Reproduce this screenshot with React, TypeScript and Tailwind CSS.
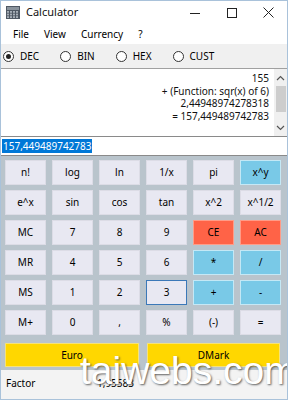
import React from "react";

const rows: { label: string; kind?: "blue" | "red" | "focus" }[][] = [
  [{ label: "n!" }, { label: "log" }, { label: "ln" }, { label: "1/x" }, { label: "pi" }, { label: "x^y", kind: "blue" }],
  [{ label: "e^x" }, { label: "sin" }, { label: "cos" }, { label: "tan" }, { label: "x^2" }, { label: "x^1/2" }],
  [{ label: "MC" }, { label: "7" }, { label: "8" }, { label: "9" }, { label: "CE", kind: "red" }, { label: "AC", kind: "red" }],
  [{ label: "MR" }, { label: "4" }, { label: "5" }, { label: "6" }, { label: "*", kind: "blue" }, { label: "/", kind: "blue" }],
  [{ label: "MS" }, { label: "1" }, { label: "2" }, { label: "3", kind: "focus" }, { label: "+", kind: "blue" }, { label: "-", kind: "blue" }],
  [{ label: "M+" }, { label: "0" }, { label: "," }, { label: "%" }, { label: "(-)" }, { label: "=" }],
];

function Radio({ label, checked }: { label: string; checked?: boolean }) {
  return (
    <div className="flex items-center gap-[6px]">
      <span className="w-[11px] h-[11px] rounded-full border border-[#333] bg-white flex items-center justify-center">
        {checked && <span className="w-[5px] h-[5px] rounded-full bg-[#222]" />}
      </span>
      <span>{label}</span>
    </div>
  );
}

function Key({ label, kind }: { label: string; kind?: "blue" | "red" | "focus" }) {
  let cls = "bg-[#e8e8f2] border-[#dcdce6]";
  if (kind === "blue") cls = "bg-[#79c9e7] border-[#c4e8f5]";
  if (kind === "red") cls = "bg-[#ff6347] border-[#ff9c88]";
  if (kind === "focus") cls = "bg-[#e8e8f2] border-[#3b78b8]";
  return (
    <div className={`h-[25px] border flex items-center justify-center text-[10px] text-black ${cls}`}>
      {label}
    </div>
  );
}

export default function App() {
  return (
    <div
      className="relative w-[288px] h-[400px] flex flex-col border border-[#a9c2da] overflow-hidden text-black"
      style={{ fontFamily: '"Noto Sans", "Open Sans", sans-serif' }}
    >
      {/* title bar */}
      <div className="h-[23px] bg-white flex items-center">
        <svg width="14" height="13" viewBox="0 0 14 13" className="ml-[5px]">
          <rect x="0" y="0" width="14" height="13" fill="#4f5863" />
          <rect x="1" y="1" width="12" height="3" fill="#8a939c" />
          {[0, 1, 2, 3].map((c) =>
            [0, 1, 2].map((r) => (
              <rect key={`${c}-${r}`} x={1 + c * 3} y={5 + r * 2.6} width="2" height="1.8" fill="#a7afb7" />
            ))
          )}
        </svg>
        <span className="ml-[6px] text-[11px] text-[#111]">Calculator</span>
        <div className="ml-auto flex h-full">
          <div className="w-[37px] flex items-center justify-center">
            <svg width="10" height="10" viewBox="0 0 10 10">
              <line x1="0" y1="5.5" x2="10" y2="5.5" stroke="#222" strokeWidth="1" />
            </svg>
          </div>
          <div className="w-[37px] flex items-center justify-center">
            <svg width="10" height="10" viewBox="0 0 10 10">
              <rect x="0.5" y="0.5" width="9" height="9" fill="none" stroke="#222" strokeWidth="1" />
            </svg>
          </div>
          <div className="w-[37px] flex items-center justify-center">
            <svg width="11" height="11" viewBox="0 0 11 11">
              <path d="M0.5 0.5 L10.5 10.5 M10.5 0.5 L0.5 10.5" stroke="#222" strokeWidth="1" />
            </svg>
          </div>
        </div>
      </div>

      {/* menu */}
      <div className="h-[20px] bg-white flex items-center pl-[12px] gap-[15px] text-[10px]">
        <span>File</span>
        <span>View</span>
        <span>Currency</span>
        <span>?</span>
      </div>

      {/* radios */}
      <div className="h-[24px] bg-[#f0f0f0] flex items-center pl-[2px] gap-[21px] text-[10px]">
        <Radio label="DEC" checked />
        <Radio label="BIN" />
        <Radio label="HEX" />
        <Radio label="CUST" />
      </div>

      {/* output */}
      <div className="h-[68px] bg-white border-t border-[#a0a0a0] flex">
        <div className="flex-1 pt-[3px] pr-[5px] text-right text-[10px] leading-[12.6px] text-[#111]">
          <div>155</div>
          <div>+ (Function: sqr(x) of 6)</div>
          <div>2,44948974278318</div>
          <div>= 157,449489742783</div>
        </div>
        <div className="w-[13px] bg-[#f0f0f0] flex flex-col items-center">
          <svg width="9" height="6" viewBox="0 0 9 6" className="mt-[6px]">
            <path d="M1 5 L4.5 1.5 L8 5" fill="none" stroke="#555" strokeWidth="1.2" />
          </svg>
          <div className="mt-[5px] w-[10px] h-[26px] bg-[#cdcdcd]" />
          <svg width="9" height="6" viewBox="0 0 9 6" className="mt-auto mb-[5px]">
            <path d="M1 1 L4.5 4.5 L8 1" fill="none" stroke="#555" strokeWidth="1.2" />
          </svg>
        </div>
      </div>

      {/* input */}
      <div className="h-[20px] bg-white border-y border-[#8a8a8a] flex items-center pl-[1px]">
        <span className="bg-[#0078d7] text-white text-[10px] leading-[14px] px-[1px]">157,449489742783</span>
      </div>

      {/* keypad */}
      <div className="bg-[#b9c4cc] pt-[4px] pb-[3px] pl-[4px]">
        <div className="grid grid-cols-[repeat(6,41px)] gap-x-[6px] gap-y-[5px]">
          {rows.flat().map((k, i) => (
            <Key key={i} label={k.label} kind={k.kind} />
          ))}
        </div>
        <div className="mt-[8px] grid grid-cols-[134px_133px] gap-x-[8px]">
          <div className="h-[24px] bg-[#ffd700] border border-[#f5e27a] flex items-center justify-center text-[10px]">Euro</div>
          <div className="h-[24px] bg-[#ffd700] border border-[#f5e27a] flex items-center justify-center text-[10px]">DMark</div>
        </div>
      </div>

      {/* factor */}
      <div className="flex-1 bg-[#f3f3f3] flex items-center text-[10px] pb-[2px]">
        <span className="pl-[5px] w-[96px]">Factor</span>
        <span>1,95583</span>
      </div>

      {/* watermark */}
      <div
        className="absolute left-[79px] top-[345px] text-[39px] leading-[50px] text-white pointer-events-none"
        style={{ fontFamily: '"Liberation Sans", sans-serif', textShadow: "1px 1px 2px rgba(60,60,60,0.8)" }}
      >
        taiwebs.com
      </div>
    </div>
  );
}
